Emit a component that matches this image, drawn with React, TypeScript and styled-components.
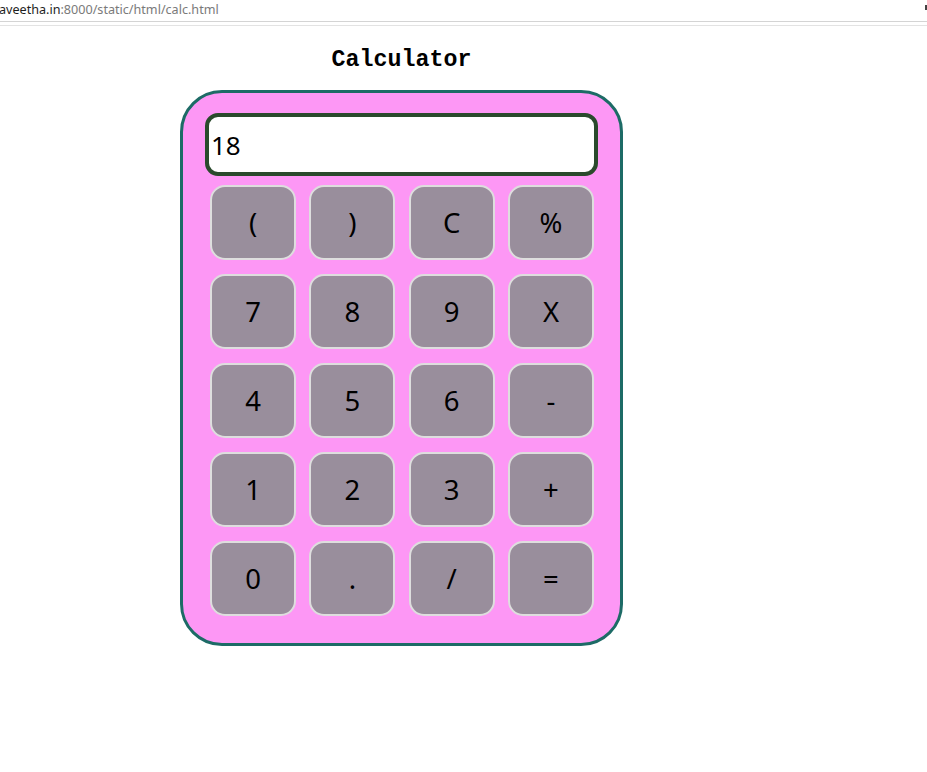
import React from "react";
import styled, { createGlobalStyle } from "styled-components";

const Global = createGlobalStyle`
  html, body { margin: 0; padding: 0; background: #ffffff; }
  body { font-family: "Noto Sans", sans-serif; }
`;

const UrlBar = styled.div`
  height: 21px;
  border-bottom: 1px solid #d4d4d4;
  position: relative;
  font-family: "Noto Sans", "DejaVu Sans", sans-serif;
  font-size: 12.6px;
  line-height: 20px;
  white-space: nowrap;
  overflow: hidden;
`;

const UrlUnder = styled.div`
  height: 3px;
  border-bottom: 1px solid #e3e3e3;
`;

const Host = styled.span`
  color: #1e1e1e;
  margin-left: -1px;
`;

const Path = styled.span`
  color: #7a7a7a;
`;

const EdgeMark = styled.span`
  position: absolute;
  right: 0;
  top: 5px;
  width: 2px;
  height: 5px;
  background: #444;
`;

const Page = styled.div`
  width: 443px;
  margin-left: 180px;
`;

const Title = styled.h1`
  margin: 0;
  height: 64px;
  padding-top: 21px;
  box-sizing: border-box;
  text-align: center;
  font-family: "Liberation Mono", "Courier New", monospace;
  font-weight: bold;
  font-size: 23.3px;
  line-height: 26px;
  color: #000;
`;

const Body = styled.div`
  box-sizing: border-box;
  width: 443px;
  height: 556px;
  background: #fd97f5;
  border: 3px solid #1d6b66;
  border-radius: 42px;
  padding: 20px 22px 0 22px;
`;

const Display = styled.div`
  box-sizing: border-box;
  height: 63px;
  border: 4px solid #2a4a2c;
  border-radius: 13px;
  background: #fff;
  font-family: "Noto Sans", sans-serif;
  font-size: 26px;
  line-height: 56px;
  padding-left: 2px;
  color: #000;
`;

const Keys = styled.div`
  display: grid;
  grid-template-columns: repeat(4, 86px);
  grid-auto-rows: 75px;
  justify-content: space-between;
  row-gap: 14px;
  width: 384px;
  margin: 9px 0 0 5px;
`;

const Key = styled.button`
  box-sizing: border-box;
  width: 86px;
  height: 75px;
  background: #998e9c;
  border: 2px solid #dedede;
  border-radius: 15px;
  font-family: "Noto Sans", sans-serif;
  font-size: 27.5px;
  color: #000;
  padding: 0 0 0 0;
  display: flex;
  align-items: center;
  justify-content: center;
`;

const keys = ["(", ")", "C", "%", "7", "8", "9", "X", "4", "5", "6", "-", "1", "2", "3", "+", "0", ".", "/", "="];

export default function App() {
  return (
    <>
      <Global />
      <UrlBar>
        <Host>aveetha.in</Host>
        <Path>:8000/static/html/calc.html</Path>
        <EdgeMark />
      </UrlBar>
      <UrlUnder />
      <Page>
        <Title>Calculator</Title>
        <Body>
          <Display>18</Display>
          <Keys>
            {keys.map((k) => (
              <Key key={k}>{k}</Key>
            ))}
          </Keys>
        </Body>
      </Page>
    </>
  );
}
